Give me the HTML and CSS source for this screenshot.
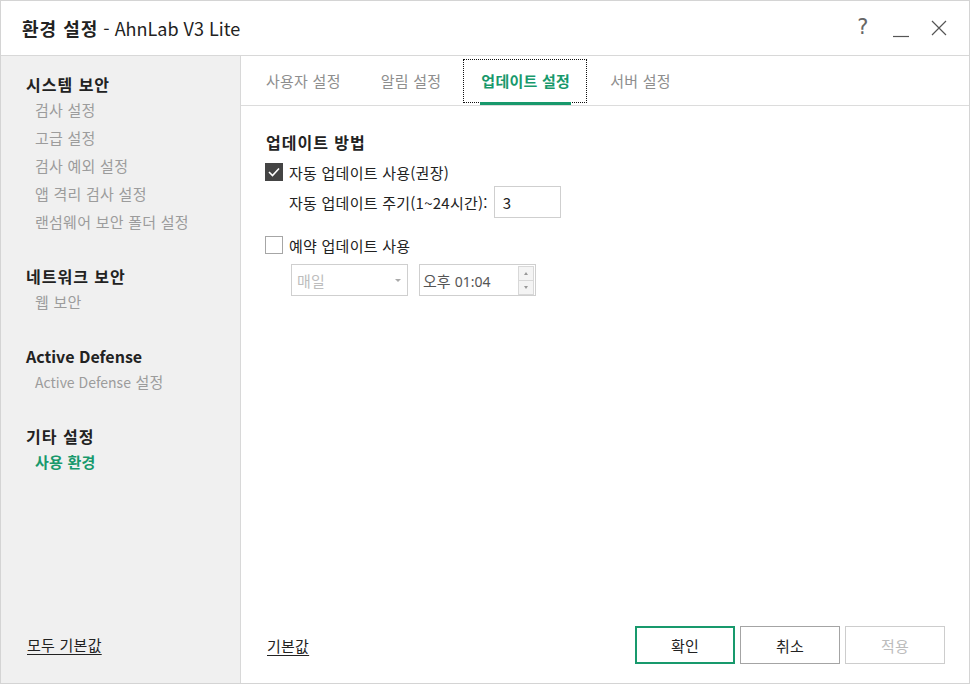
FILE: index.html
```html
<!DOCTYPE html>
<html lang="ko">
<head>
<meta charset="utf-8">
<title>환경 설정 - AhnLab V3 Lite</title>
<link rel="stylesheet" href="styles.css">
</head>
<body>
<div class="window">
  <header class="titlebar">
    <div class="title"><b>환경 설정</b> - AhnLab V3 Lite</div>
    <div class="controls">
      <span class="ctl help">?</span>
      <span class="ctl min"><svg width="16" height="16" viewBox="0 0 16 16"><line x1="0" y1="14.5" x2="16" y2="14.5" stroke="#555" stroke-width="1.2"/></svg></span>
      <span class="ctl close"><svg width="16" height="16" viewBox="0 0 16 16"><path d="M1 1 L15 15 M15 1 L1 15" stroke="#555" stroke-width="1.2" fill="none"/></svg></span>
    </div>
  </header>
  <div class="body">
    <aside class="sidebar">
      <div class="section">
        <div class="sec-head">시스템 보안</div>
        <div class="sec-item">검사 설정</div>
        <div class="sec-item">고급 설정</div>
        <div class="sec-item">검사 예외 설정</div>
        <div class="sec-item">앱 격리 검사 설정</div>
        <div class="sec-item">랜섬웨어 보안 폴더 설정</div>
      </div>
      <div class="section">
        <div class="sec-head">네트워크 보안</div>
        <div class="sec-item">웹 보안</div>
      </div>
      <div class="section">
        <div class="sec-head en">Active Defense</div>
        <div class="sec-item"><span class="en">Active Defense</span> 설정</div>
      </div>
      <div class="section">
        <div class="sec-head">기타 설정</div>
        <div class="sec-item active">사용 환경</div>
      </div>
      <div class="side-foot"><a class="link">모두 기본값</a></div>
    </aside>
    <main class="main">
      <nav class="tabs">
        <div class="tab">사용자 설정</div>
        <div class="tab">알림 설정</div>
        <div class="tab active">업데이트 설정</div>
        <div class="tab">서버 설정</div>
      </nav>
      <section class="content">
        <h2 class="heading">업데이트 방법</h2>
        <div class="row r1">
          <span class="cb checked"><svg width="12" height="10" viewBox="0 0 12 10"><path d="M1 5 L4.5 8.5 L11 1.5" stroke="#fff" stroke-width="1.6" fill="none"/></svg></span>
          <span class="lbl">자동 업데이트 사용(권장)</span>
        </div>
        <div class="row r2">
          <span class="lbl">자동 업데이트 주기(1~24시간):</span>
          <span class="input num">3</span>
        </div>
        <div class="row r3">
          <span class="cb"></span>
          <span class="lbl">예약 업데이트 사용</span>
        </div>
        <div class="row r4">
          <span class="input select"><span class="dis">매일</span><span class="arrow"></span></span>
          <span class="input time"><span class="tval">오후 <span class="en">01:04</span></span>
            <span class="spin"><span class="sp up"></span><span class="sp down"></span></span>
          </span>
        </div>
      </section>
      <footer class="main-foot">
        <a class="link">기본값</a>
        <div class="buttons">
          <button class="btn primary">확인</button>
          <button class="btn">취소</button>
          <button class="btn disabled">적용</button>
        </div>
      </footer>
    </main>
  </div>
</div>
</body>
</html>
```
FILE: styles.css
```css
* { box-sizing: border-box; }
html, body { margin: 0; padding: 0; background: #fff; }
body {
  font-family: "Noto Sans CJK KR", "Noto Sans", "Liberation Sans", sans-serif;
  color: #222;
  font-size: 15px;
  letter-spacing: 0.25px;
}
.window {
  width: 970px;
  height: 684px;
  border: 1px solid #d4d4d4;
  display: flex;
  flex-direction: column;
  overflow: hidden;
}
.titlebar {
  height: 55px;
  flex: none;
  border-bottom: 1px solid #d8d8d8;
  display: flex;
  align-items: center;
  padding: 0 0 0 21px;
}
.title { font-size: 18px; color: #222; letter-spacing: 0; }
.title b { font-weight: 700; letter-spacing: 1px; }
.controls { margin-left: auto; display: flex; align-items: center; height: 100%; padding-right: 22px; }
.ctl { display: flex; align-items: center; justify-content: center; color: #555; }
.help { font-size: 21px; font-family: "DejaVu Sans", sans-serif; font-weight: normal; width: 16px; margin-right: 22px; margin-top: -2px; color: #666; }
.min { margin-right: 22px; margin-top: 4px; }
.close { margin-top: -1px; }

.body { flex: 1; display: flex; min-height: 0; }
.sidebar {
  width: 240px;
  flex: none;
  background: #f0f0f0;
  border-right: 1px solid #d8d8d8;
  display: flex;
  flex-direction: column;
  padding: 16px 0 0 25px;
}
.section + .section { margin-top: 28px; }
.sec-head { font-size: 16px; font-weight: 700; line-height: 24px; color: #222; letter-spacing: 1px; }
.sec-head.en { letter-spacing: 0; }
.sec-item { font-size: 15px; line-height: 28px; color: #9c9c9c; padding-left: 9px; }
.sec-item .en { font-size: 14px; letter-spacing: 0; }
.sec-item.active { color: #18996c; font-weight: 700; }
.side-foot { margin-top: auto; padding: 0 0 28px 1px; line-height: 20px; }
.link { color: #222; text-decoration: underline; text-underline-offset: 3px; font-size: 15px; }

.main { flex: 1; display: flex; flex-direction: column; }
.tabs {
  height: 50px;
  flex: none;
  border-bottom: 1px solid #dcdcdc;
  display: flex;
  padding-left: 5px;
}
.tab {
  position: relative;
  display: flex;
  align-items: center;
  padding: 0 20px;
  color: #8e8e8e;
  font-size: 15px;
  height: 49px;
}
.tab.active { color: #18996c; font-weight: 700; }
.tab.active::before {
  content: "";
  position: absolute;
  top: 3px; left: 2px; right: 3px; bottom: 2px;
  border: 1px dotted #111;
}
.tab.active::after {
  content: "";
  position: absolute;
  left: 19px; right: 19px; bottom: 0;
  height: 3px;
  background: #18996c;
}

.content { padding: 25px 0 0 25px; }
.heading { margin: 0; font-size: 16px; font-weight: 700; line-height: 22px; color: #222; letter-spacing: 1px; }
.row { display: flex; align-items: center; }
.r1 { height: 22px; margin-top: 8px; margin-left: -1px; }
.r2 { height: 32px; margin-top: 3px; padding-left: 23px; }
.r3 { height: 22px; margin-top: 16px; margin-left: -1px; }
.r4 { height: 32px; margin-top: 8px; padding-left: 25px; gap: 11px; }
.lbl { font-size: 15px; color: #222; }
.cb {
  width: 18px; height: 18px;
  border: 1px solid #a6a6a6;
  background: #fff;
  display: inline-flex; align-items: center; justify-content: center;
  margin-right: 6px;
}
.cb.checked { background: #444; border-color: #444; }
.input {
  height: 32px;
  border: 1px solid #cfcfcf;
  background: #fff;
  display: inline-flex;
  align-items: center;
}
.num { width: 67px; margin-left: 6px; padding-left: 8px; color: #222; }
.select { width: 117px; padding: 0 6px 0 5px; }
.dis { color: #bdbdbd; }
.arrow {
  margin-left: auto;
  width: 0; height: 0;
  border-left: 3.5px solid transparent;
  border-right: 3.5px solid transparent;
  border-top: 3.5px solid #aaa;
}
.time { width: 117px; padding-left: 3px; }
.tval { color: #555; letter-spacing: 0; }
.tval .en { font-family: "Noto Sans", "Liberation Sans", sans-serif; font-size: 14px; }
.spin {
  margin-left: auto;
  margin-right: 1px;
  width: 16px; height: 29px;
  display: flex; flex-direction: column;
  border: 1px solid #d8d8d8;
  background: #f4f4f4;
}
.sp { flex: 1; display: flex; align-items: center; justify-content: center; }
.sp.up { border-bottom: 1px solid #d8d8d8; }
.sp.up::before {
  content: ""; width: 0; height: 0;
  border-left: 2.5px solid transparent; border-right: 2.5px solid transparent;
  border-bottom: 3px solid #999;
}
.sp.down::before {
  content: ""; width: 0; height: 0;
  border-left: 2.5px solid transparent; border-right: 2.5px solid transparent;
  border-top: 3px solid #999;
}

.main-foot {
  margin-top: auto;
  display: flex;
  align-items: center;
  padding: 0 24px 19px 26px;
}
.buttons { margin-left: auto; display: flex; gap: 5px; }
.btn {
  width: 100px; height: 38px;
  border: 1px solid #a4a4a4;
  background: #fff;
  font-family: inherit;
  font-size: 15px;
  letter-spacing: 0.25px;
  color: #222;
  padding: 0;
}
.btn.primary { border: 2px solid #18996c; }
.btn.disabled { border-color: #cdcdcd; color: #bcbcbc; }
```
